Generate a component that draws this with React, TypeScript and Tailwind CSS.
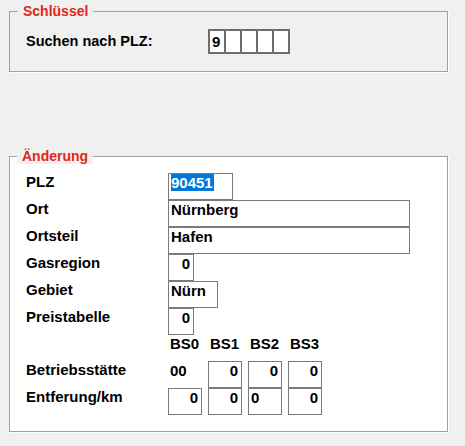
const Box = ({
  value,
  w,
  align = "left",
  selected = false,
}: {
  value?: string;
  w: string;
  align?: "left" | "right";
  selected?: boolean;
}) => (
  <div
    className={`${w} h-[27px] shrink-0 border border-[#7a7a7a] bg-white flex items-start leading-4 ${
      align === "right" ? "justify-end pr-[3px]" : "pl-[2px]"
    }`}
  >
    {selected ? (
      <span className="bg-[#0078d7] text-white leading-[17px] pr-px">{value}</span>
    ) : (
      <span className="pt-px">{value}</span>
    )}
  </div>
);

const Row = ({ label, children }: { label: string; children?: any }) => (
  <div className="flex h-[27px]">
    <div className="w-[142px] shrink-0 pt-px leading-4">{label}</div>
    {children}
  </div>
);

export default function App() {
  const bsHeaders = ["BS0", "BS1", "BS2", "BS3"];

  return (
    <div className="w-[465px] h-[446px] overflow-hidden bg-[#f0f0f0] pt-[3px] pl-[9px] text-[14px] font-bold text-black font-['Liberation_Sans',Arial,sans-serif]">
      {/* Schlüssel */}
      <fieldset className="w-[439px] border border-[#a0a0a0] shadow-[1px_1px_0_#ffffff] pl-[8px] pt-[10px] pb-[17px]">
        <legend className="px-[5px] leading-4 text-[#e2261b]">Schlüssel</legend>
        <div className="flex items-center h-[25px]">
          <div className="w-[190px] shrink-0 pl-[8px] leading-4 -mt-[2px] text-[14.5px]">Suchen nach PLZ:</div>
          <div className="flex">
            {["9", "", "", "", ""].map((v, i) => (
              <div
                key={i}
                className={`w-[18px] h-[25px] border-2 border-[#6d6d6d] bg-white pl-[2px] leading-[21px] text-[15px] ${
                  i > 0 ? "-ml-[2px]" : ""
                }`}
              >
                {v}
              </div>
            ))}
          </div>
        </div>
      </fieldset>

      {/* Änderung */}
      <fieldset className="mt-[76px] w-[439px] border border-[#a0a0a0] shadow-[1px_1px_0_#ffffff] bg-white pl-[7px] pt-[9px] pb-[16px]">
        <legend className="px-[5px] leading-4 bg-[#f0f0f0] text-[#e2261b]">Änderung</legend>
        <div className="pl-[9px] text-[15px]">
          <Row label="PLZ">
            <Box w="w-[65px]" value="90451" selected />
          </Row>
          <Row label="Ort">
            <Box w="w-[242px]" value="Nürnberg" />
          </Row>
          <Row label="Ortsteil">
            <Box w="w-[242px]" value="Hafen" />
          </Row>
          <Row label="Gasregion">
            <Box w="w-[26px]" value="0" align="right" />
          </Row>
          <Row label="Gebiet">
            <Box w="w-[50px]" value="Nürn" />
          </Row>
          <Row label="Preistabelle">
            <Box w="w-[26px]" value="0" align="right" />
          </Row>
          <div className="flex h-[26px]">
            <div className="w-[142px] shrink-0" />
            {bsHeaders.map((h) => (
              <div key={h} className="w-[40px] shrink-0 pl-[2px] pt-px leading-4">
                {h}
              </div>
            ))}
          </div>
          <Row label="Betriebsstätte">
            <div className="w-[40px] shrink-0 pl-[2px] pt-[2px] leading-4">00</div>
            <div className="flex gap-[6px]">
              <Box w="w-[34px]" value="0" align="right" />
              <Box w="w-[34px]" value="0" align="right" />
              <Box w="w-[34px]" value="0" align="right" />
            </div>
          </Row>
          <Row label="Entferung/km">
            <div className="flex gap-[6px]">
              <Box w="w-[34px]" value="0" align="right" />
              <Box w="w-[34px]" value="0" align="right" />
              <Box w="w-[34px]" value="0" />
              <Box w="w-[34px]" value="0" align="right" />
            </div>
          </Row>
        </div>
      </fieldset>
    </div>
  );
}
